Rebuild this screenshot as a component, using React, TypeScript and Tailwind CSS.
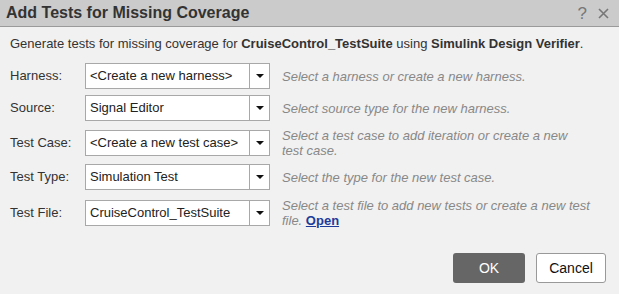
import React from "react";

function Row({ label, value, children, className }: { label: string; value: string; children: React.ReactNode; className: string }) {
  return (
    <div className={`flex items-center ${className}`}>
      <div className="w-[85px] shrink-0 pl-[10px] text-[13px] leading-[16px] text-[#333]">{label}</div>
      <div className="flex h-[26px] w-[185px] shrink-0 border border-[#a8a8a8] bg-white">
        <div className="flex-1 pl-[4px] text-[13px] leading-[24px] text-[#222]">{value}</div>
        <div className="flex w-[20px] items-center justify-center border-l border-[#a8a8a8]">
          <svg width="8" height="4" viewBox="0 0 8 4"><path d="M0 0h8L4 4z" fill="#111" /></svg>
        </div>
      </div>
      <div className="pl-[12px] text-[13px] italic leading-[15px] text-[#888]">{children}</div>
    </div>
  );
}

export default function App() {
  return (
    <div className="flex h-[294px] w-[619px] flex-col bg-[#f1f1f1] font-['Liberation_Sans',Arial,sans-serif]">
      <div className="flex h-[27px] items-center border-b border-[#9a9a9a] bg-[#cbcbcb] pl-[6px] pr-[10px]">
        <div className="flex-1 text-[16px] font-bold text-[#333]">Add Tests for Missing Coverage</div>
        <div className="text-[17px] leading-none text-[#777]">?</div>
        <svg className="ml-[11px]" width="11" height="11" viewBox="0 0 11 11"><path d="M1 1l9 9M10 1l-9 9" stroke="#777" strokeWidth="1.6" /></svg>
      </div>
      <div className="pl-[10px] pt-[9px] text-[13px] leading-[16px] text-[#333]">
        Generate tests for missing coverage for <b>CruiseControl_TestSuite</b> using <b>Simulink Design Verifier</b>.
      </div>
      <Row className="mt-[11px] h-[26px]" label="Harness:" value="<Create a new harness>">Select a harness or create a new harness.</Row>
      <Row className="mt-[6px] h-[26px]" label="Source:" value="Signal Editor">Select source type for the new harness.</Row>
      <Row className="mt-[7px] h-[30px]" label="Test Case:" value="<Create a new test case>">
        Select a test case to add iteration or create a new<br />test case.
      </Row>
      <Row className="mt-[6px] h-[26px]" label="Test Type:" value="Simulation Test">Select the type for the new test case.</Row>
      <Row className="mt-[8px] h-[30px]" label="Test File:" value="CruiseControl_TestSuite">
        Select a test file to add new tests or create a new test<br />file. <a className="font-bold not-italic text-[#1f3b9a] underline">Open</a>
      </Row>
      <div className="mt-[25px] flex justify-end gap-[11px] pr-[13px]">
        <button className="h-[30px] w-[72px] rounded-[3px] bg-[#666] text-[14px] text-white">OK</button>
        <button className="h-[30px] w-[70px] rounded-[3px] border border-[#999] bg-white text-[14px] text-[#111]">Cancel</button>
      </div>
    </div>
  );
}
